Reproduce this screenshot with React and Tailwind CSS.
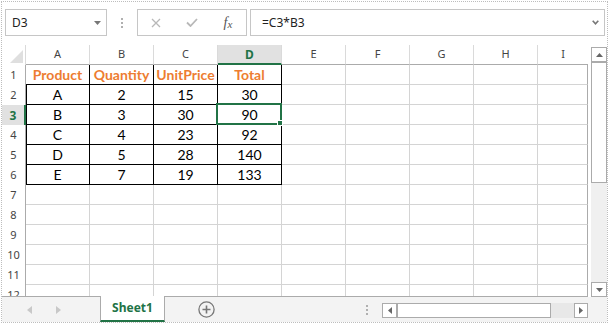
import React from "react";

const GREEN = "#217346";

const data = [
  ["Product", "Quantity", "UnitPrice", "Total"],
  ["A", "2", "15", "30"],
  ["B", "3", "30", "90"],
  ["C", "4", "23", "92"],
  ["D", "5", "28", "140"],
  ["E", "7", "19", "133"],
];

const cols = ["A", "B", "C", "D", "E", "F", "G", "H", "I"];

function HeaderRow() {
  return (
    <div className="flex h-5 shrink-0 font-['Noto_Sans',sans-serif] text-[11px] text-[#444]">
      <div className="w-6 shrink-0 border-r border-[#dadada] flex items-end justify-end pr-[2px] pb-[2px]">
        <svg width="13" height="13" viewBox="0 0 13 13">
          <polygon points="13,0 13,13 0,13" fill="#dfdfdf" />
        </svg>
      </div>
      {cols.map((c, i) => {
        if (i === 8) {
          return (
            <div key={c} className="w-[50px] shrink-0 border-b border-[#ababab] flex items-center justify-center">
              {c}
            </div>
          );
        }
        if (i === 3) {
          return (
            <div key={c} className="w-16 shrink-0 border-r border-r-[#dadada] border-b-2 border-b-[#217346] bg-[#e1e1e1] flex items-center justify-center pt-px font-bold text-[12px] text-[#217346]">
              {c}
            </div>
          );
        }
        return (
          <div key={c} className="w-16 shrink-0 border-r border-r-[#dadada] border-b border-b-[#ababab] flex items-center justify-center">
            {c}
          </div>
        );
      })}
    </div>
  );
}

function Cell({ r, c }) {
  const inTable = r <= 6 && c <= 3;
  const text = inTable ? data[r - 1][c] : "";
  const isSel = r === 3 && c === 3;
  let cls;
  if (inTable) {
    cls = "border-r border-b border-black";
  } else if (c === 8) {
    cls = "border-r border-b border-r-[#ababab] border-b-[#d4d4d4]";
  } else {
    cls = "border-r border-b border-[#d4d4d4]";
  }
  const width = c === 8 ? "w-[50px]" : "w-16";
  const leftEdge = inTable && c === 0 && r >= 2 ? "shadow-[inset_1px_0_0_#000]" : "";
  const textCls = r === 1 && inTable ? "font-bold text-[#ed7d31]" : "text-black";
  return (
    <div className={`${width} ${cls} ${leftEdge} ${textCls} shrink-0 relative flex items-center justify-center leading-[19px]`}>
      {text}
      {isSel && (
        <div className="absolute -left-[2px] -top-[2px] -right-px -bottom-px border-2 border-[#217346] z-10">
          <div className="absolute -right-[3px] -bottom-[3px] w-[6px] h-[6px] bg-[#217346] border border-white" />
        </div>
      )}
    </div>
  );
}

function BodyRow({ r }) {
  const sel = r === 3;
  return (
    <div className="flex h-5 shrink-0 font-['Lato',sans-serif] text-[14px]">
      <div
        className={
          sel
            ? "w-6 shrink-0 border-r-2 border-[#217346] bg-[#e1e1e1] flex items-center justify-center pt-px font-bold text-[#217346] text-[12px] font-['Noto_Sans',sans-serif]"
            : "w-6 shrink-0 border-r border-[#ababab] flex items-center justify-center pt-px text-[#444] text-[11px] font-['Noto_Sans',sans-serif]"
        }
      >
        {r}
      </div>
      {cols.map((_, c) => (
        <Cell key={c} r={r} c={c} />
      ))}
    </div>
  );
}

function Dots() {
  return (
    <div className="flex flex-col gap-[2px]">
      <div className="w-[2px] h-[2px] bg-[#b0b0b0]" />
      <div className="w-[2px] h-[2px] bg-[#b0b0b0]" />
      <div className="w-[2px] h-[2px] bg-[#b0b0b0]" />
    </div>
  );
}

export default function App() {
  const rows = [1, 2, 3, 4, 5, 6, 7, 8, 9, 10, 11, 12];
  return (
    <div className="w-[609px] h-[324px] p-px bg-white overflow-hidden">
      <div className="h-full border border-dotted border-[#bdbdbd] flex flex-col">
        {/* formula bar */}
        <div className="mt-[7px] ml-[3px] mr-[2px] flex h-[27px] shrink-0 font-['Noto_Sans',sans-serif] text-[12px] text-[#222]">
          <div className="w-[102px] shrink-0 border border-[#c6c6c6] flex items-center justify-between pl-[6px] pr-[5px]">
            <span>D3</span>
            <svg width="7" height="4" viewBox="0 0 7 4">
              <polygon points="0,0 7,0 3.5,4" fill="#777" />
            </svg>
          </div>
          <div className="w-[30px] shrink-0 flex items-center justify-center">
            <Dots />
          </div>
          <div className="w-[110px] shrink-0 border border-[#c6c6c6] flex items-center">
            <div className="w-9 flex justify-center">
              <svg width="10" height="10" viewBox="0 0 10 10">
                <path d="M1 1 L9 9 M9 1 L1 9" stroke="#b8b8b8" strokeWidth="1.3" fill="none" />
              </svg>
            </div>
            <div className="w-9 flex justify-center">
              <svg width="12" height="9" viewBox="0 0 12 9">
                <path d="M1 4.5 L4.5 8 L11 1" stroke="#b8b8b8" strokeWidth="1.8" fill="none" />
              </svg>
            </div>
            <div className="w-9 flex justify-center font-['Liberation_Serif',serif] italic text-[14px] text-[#555] leading-none">
              <span>f</span>
              <span className="text-[11px] pt-[3px]">x</span>
            </div>
          </div>
          <div className="ml-[3px] flex-1 border border-[#c6c6c6] flex items-center justify-between pl-[11px] pr-[5px]">
            <span>=C3*B3</span>
            <svg width="7" height="5" viewBox="0 0 7 5">
              <path d="M0.7 0.7 L3.5 3.8 L6.3 0.7" stroke="#777" strokeWidth="1.6" fill="none" />
            </svg>
          </div>
        </div>

        {/* main area */}
        <div className="mt-[9px] flex h-[252px] shrink-0">
          <div className="w-[586px] shrink-0 flex flex-col">
            <HeaderRow />
            <div className="h-[232px] overflow-hidden border-b border-[#ababab] flex flex-col">
              {rows.map((r) => (
                <BodyRow key={r} r={r} />
              ))}
            </div>
          </div>
          <div className="w-[3px] shrink-0" />
          <div className="w-4 shrink-0 flex flex-col pt-[2px]">
            <div className="h-[15px] shrink-0 border border-[#ababab] bg-white flex items-center justify-center">
              <svg width="7" height="4" viewBox="0 0 7 4">
                <polygon points="0,4 7,4 3.5,0" fill="#666" />
              </svg>
            </div>
            <div className="h-[121px] shrink-0 border border-[#ababab] bg-white" />
            <div className="flex-1 bg-[#f0f0f0]" />
            <div className="h-[15px] shrink-0 border border-[#ababab] bg-white flex items-center justify-center">
              <svg width="7" height="4" viewBox="0 0 7 4">
                <polygon points="0,0 7,0 3.5,4" fill="#666" />
              </svg>
            </div>
          </div>
        </div>

        {/* bottom bar */}
        <div className="flex h-[25px] shrink-0 bg-[#f3f3f3] items-center">
          <div className="w-[98px] shrink-0 flex items-center pl-[25px]">
            <svg width="5" height="8" viewBox="0 0 5 8">
              <polygon points="5,0 5,8 0,4" fill="#c8c8c8" />
            </svg>
            <svg width="5" height="8" viewBox="0 0 5 8" className="ml-[24px]">
              <polygon points="0,0 0,8 5,4" fill="#c8c8c8" />
            </svg>
          </div>
          <div className="w-[65px] h-[26px] self-end shrink-0 bg-white border-x border-[#ababab] border-b-2 border-b-[#217346] flex items-center justify-center font-['Noto_Sans',sans-serif] font-bold text-[12px] text-[#217346]">
            Sheet1
          </div>
          <div className="ml-[33px] shrink-0 flex">
            <svg width="17" height="17" viewBox="0 0 17 17">
              <circle cx="8.5" cy="8.5" r="7.6" stroke="#777" strokeWidth="1.3" fill="none" />
              <path d="M8.5 4.5 V12.5 M4.5 8.5 H12.5" stroke="#777" strokeWidth="1.6" />
            </svg>
          </div>
          <div className="ml-[151px] shrink-0">
            <Dots />
          </div>
          <div className="ml-[14px] w-[206px] h-[15px] self-start mt-[6px] shrink-0 flex">
            <div className="w-[15px] shrink-0 border border-[#ababab] bg-white flex items-center justify-center">
              <svg width="4" height="7" viewBox="0 0 4 7">
                <polygon points="4,0 4,7 0,3.5" fill="#666" />
              </svg>
            </div>
            <div className="w-[154px] shrink-0 border border-[#ababab] bg-white" />
            <div className="w-[23px] shrink-0 bg-[#e8e8e8]" />
            <div className="w-[14px] shrink-0 border border-[#ababab] bg-white flex items-center justify-center">
              <svg width="4" height="7" viewBox="0 0 4 7">
                <polygon points="0,0 0,7 4,3.5" fill="#666" />
              </svg>
            </div>
          </div>
        </div>
      </div>
    </div>
  );
}
